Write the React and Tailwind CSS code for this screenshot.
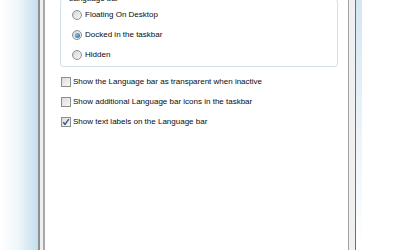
import { useState } from "react";

const radioOptions = [
    { id: "floating", label: "Floating On Desktop" },
    { id: "docked", label: "Docked in the taskbar" },
    { id: "hidden", label: "Hidden" },
];

const checkOptions = [
    { id: "transparent", label: "Show the Language bar as transparent when inactive", checked: false },
    { id: "icons", label: "Show additional Language bar icons in the taskbar", checked: false },
    { id: "labels", label: "Show text labels on the Language bar", checked: true },
];

const Radio = ({ checked }) => (
    <span className="flex h-[10px] w-[10px] shrink-0 items-center justify-center rounded-full border border-[#8c8e90] bg-gradient-to-br from-[#d4d6d8] to-[#f8f8f8]">
        {checked && (
            <span className="h-[5px] w-[5px] rounded-full bg-[radial-gradient(circle_at_35%_35%,#7cc4ea,#1b5d8c)]"></span>
        )}
    </span>
);

const Checkbox = ({ checked }) => (
    <span className="relative flex h-[10px] w-[10px] shrink-0 items-center justify-center border border-[#8e8f8f] bg-gradient-to-br from-[#dcdcdc] to-[#f7f7f7]">
        {checked && (
            <svg width="8" height="8" viewBox="0 0 8 8" className="absolute">
                <path d="M1.2 4.2 L3 6.3 L6.8 1.2" fill="none" stroke="#3b5489" strokeWidth="1.4" />
            </svg>
        )}
    </span>
);

export default function App() {
    const [position, setPosition] = useState("docked");
    const [checks, setChecks] = useState(checkOptions);

    const toggle = (id) =>
        setChecks(checks.map((c) => (c.id === id ? { ...c, checked: !c.checked } : c)));

    return (
        <div className="flex h-[250px] w-[400px] overflow-hidden bg-white font-['Liberation_Sans',Arial,sans-serif] text-[8px] leading-[10px] text-[#0a0a0a]">
            {/* window glass */}
            <div className="w-[38px] shrink-0 bg-gradient-to-r from-white via-[#eef5fa] to-[#c4dded]"></div>
            <div className="w-[2px] shrink-0 bg-[#8f8f8f]"></div>
            <div className="w-[3px] shrink-0 bg-[#efefef]"></div>
            <div className="w-[2px] shrink-0 bg-[#a8a8a8]"></div>

            {/* tab page */}
            <div className="w-[303px] shrink-0 pl-[15px] pr-[10px]">
                <fieldset className="mt-[-6px] rounded-[3px] border border-[#d5dfe5] pb-[1px] pl-[11px]">
                    <legend className="ml-[-5px] px-[2px]">Language bar</legend>
                    <div className="flex flex-col pt-[1px]">
                        {radioOptions.map((opt) => (
                            <label
                                key={opt.id}
                                onClick={() => setPosition(opt.id)}
                                className="flex h-[20px] items-center gap-[2px]"
                            >
                                <Radio checked={position === opt.id} />
                                <span className="pl-[1px]">{opt.label}</span>
                            </label>
                        ))}
                    </div>
                </fieldset>

                <div className="mt-[5px] flex flex-col pl-[1px]">
                    {checks.map((opt) => (
                        <label
                            key={opt.id}
                            onClick={() => toggle(opt.id)}
                            className="flex h-[20px] items-center gap-[2px]"
                        >
                            <Checkbox checked={opt.checked} />
                            <span>{opt.label}</span>
                        </label>
                    ))}
                </div>
            </div>

            {/* frame edge */}
            <div className="w-px shrink-0 bg-[#a2a2a2]"></div>
            <div className="w-[6px] shrink-0 bg-[#f0f0f0]"></div>
            <div className="w-px shrink-0 bg-[#6f6f6f]"></div>
            <div className="w-[6px] shrink-0 bg-gradient-to-b from-[#d4e6f2] via-[#eaf3f9] to-white"></div>
            <div className="flex-1 bg-white"></div>
        </div>
    );
}
